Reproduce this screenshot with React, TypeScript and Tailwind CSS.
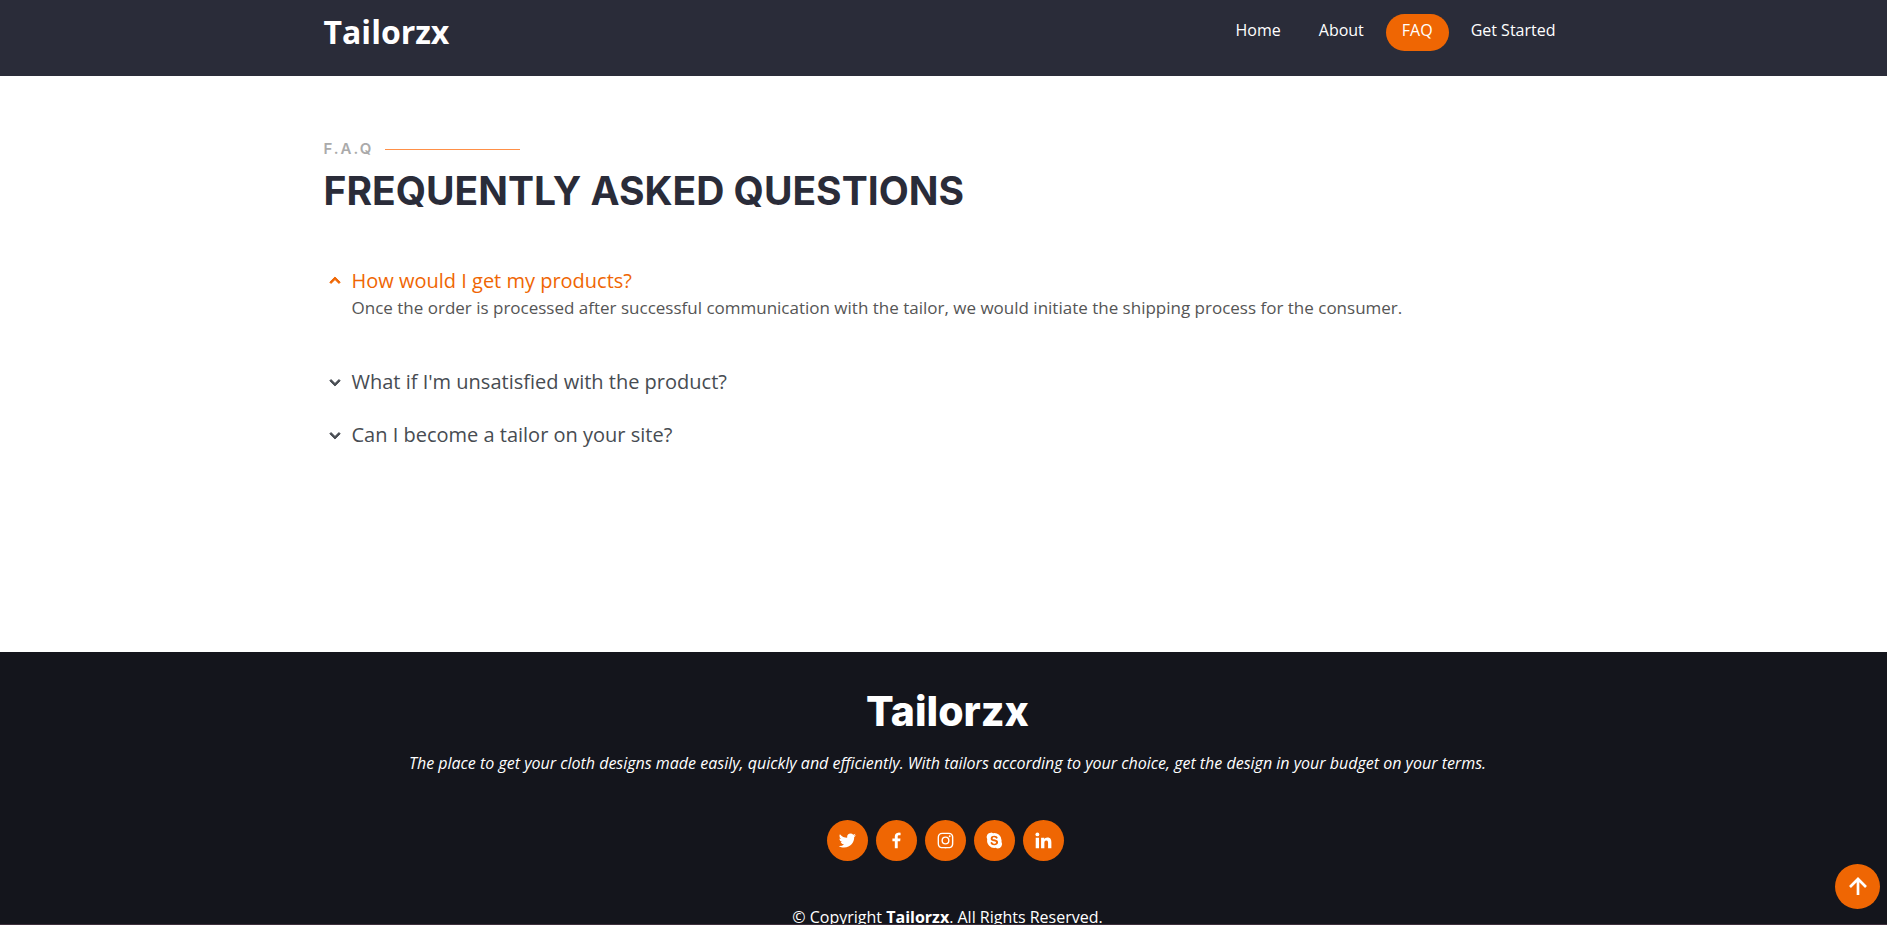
import { useState } from "react";
import {
  BiChevronDown,
  BiChevronUp,
  BiLogoFacebook,
  BiLogoInstagram,
  BiLogoLinkedin,
  BiLogoSkype,
  BiLogoTwitter,
  BiUpArrowAlt,
} from "react-icons/bi";

const navLinks = ["Home", "About", "FAQ", "Get Started"];

const questions = [
  {
    question: "How would I get my products?",
    answer:
      "Once the order is processed after successful communication with the tailor, we would initiate the shipping process for the consumer.",
  },
  {
    question: "What if I'm unsatisfied with the product?",
    answer: "Get in touch with the tailor and we will help you settle the order.",
  },
  {
    question: "Can I become a tailor on your site?",
    answer: "Yes, sign up through the Get Started page.",
  },
];

const socials = [
  { name: "Twitter", Icon: BiLogoTwitter },
  { name: "Facebook", Icon: BiLogoFacebook },
  { name: "Instagram", Icon: BiLogoInstagram },
  { name: "Skype", Icon: BiLogoSkype },
  { name: "LinkedIn", Icon: BiLogoLinkedin },
];

function Header() {
  return (
    <header className="h-[76px] bg-[#2a2c39] pl-2">
      <div className="mx-auto flex max-w-[1248px] items-start justify-between">
        <a href="#home" className="pt-3 text-[32px] leading-10 font-bold text-white">
          Tailorzx
        </a>
        <nav className="flex gap-1.5 pt-3.5">
          {navLinks.map((label) => (
            <a
              key={label}
              href="#"
              className={`rounded-full px-4 pt-1 pb-[9px] text-base leading-6 text-white ${
                label === "FAQ" ? "bg-[#ef6603]" : ""
              }`}
            >
              {label}
            </a>
          ))}
        </nav>
      </div>
    </header>
  );
}

function Faq() {
  const [open, setOpen] = useState(0);
  return (
    <main className="min-h-[576px] pt-[63px] pl-2">
      <div className="mx-auto max-w-[1248px]">
        <h2 className="flex items-center gap-3 font-['Inter',sans-serif] text-[15px] leading-5 font-semibold tracking-[2px] text-[#aaaaaa]">
          F.A.Q
          <span className="h-px w-[135px] bg-[#ff9048]" />
        </h2>
        <p className="mt-0.5 font-['Inter',sans-serif] text-[39px] leading-[60px] font-bold text-[#2a2c39] uppercase">
          Frequently Asked Questions
        </p>
        <ul className="mt-[46px] flex flex-col gap-[25px]">
          {questions.map(({ question, answer }, index) => {
            const active = open === index;
            const Chevron = active ? BiChevronUp : BiChevronDown;
            return (
              <li key={question}>
                <button
                  type="button"
                  aria-expanded={active}
                  onClick={() => setOpen(active ? -1 : index)}
                  className={`flex items-center gap-1.5 text-left text-xl leading-7 ${
                    active ? "text-[#ef6603]" : "text-[#474c52]"
                  }`}
                >
                  <Chevron className="size-[22px]" stroke="currentColor" strokeWidth={1} />
                  {question}
                </button>
                {active && <p className="mb-[22px] pl-7 text-[17px] leading-[26px] text-[#555555]">{answer}</p>}
              </li>
            );
          })}
        </ul>
      </div>
    </main>
  );
}

function Footer() {
  return (
    <footer className="flex flex-col items-center bg-[#14151c] pt-[34px] pb-8 pl-2 text-white">
      <h3 className="font-['Inter',sans-serif] text-[41px] leading-[50px] font-extrabold">Tailorzx</h3>
      <p className="mt-[15px] text-center text-base leading-6 italic">
        The place to get your cloth designs made easily, quickly and efficiently. With tailors according to your
        choice, get the design in your budget on your terms.
      </p>
      <div className="mt-[45px] mr-1 flex gap-2">
        {socials.map(({ name, Icon }) => (
          <a
            key={name}
            href="#"
            aria-label={name}
            className="flex size-[41px] items-center justify-center rounded-full bg-[#ef6603]"
          >
            <Icon className="size-[21px]" />
          </a>
        ))}
      </div>
      <p className="mt-11 text-base leading-6">
        © Copyright <strong>Tailorzx</strong>. All Rights Reserved.
      </p>
    </footer>
  );
}

export default function App() {
  return (
    <div className="h-screen overflow-y-auto border-b border-[#3d2f3b] bg-white font-['Open_Sans',sans-serif] [scrollbar-width:none]">
      <Header />
      <Faq />
      <Footer />
      <a
        href="#top"
        aria-label="Back to top"
        className="fixed right-[7px] bottom-4 flex size-[45px] items-center justify-center rounded-full bg-[#ef6603] text-white"
      >
        <BiUpArrowAlt className="size-8" />
      </a>
    </div>
  );
}
